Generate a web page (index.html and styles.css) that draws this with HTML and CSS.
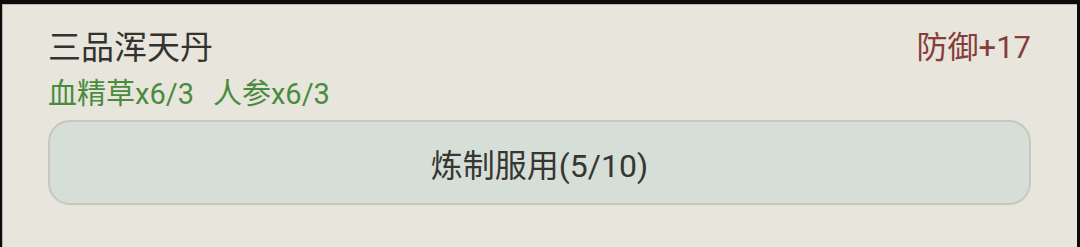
FILE: index.html
```html
<!DOCTYPE html>
<html lang="zh">
<head>
<meta charset="utf-8">
<link rel="stylesheet" href="styles.css">
</head>
<body>
<div class="frame">
  <div class="card">
    <div class="head">
      <div class="title">三品浑天丹</div>
      <div class="stat">防御+17</div>
    </div>
    <div class="mats"><span>血精草x6/3</span><span>人参x6/3</span></div>
    <div class="btn">炼制服用(5/10)</div>
  </div>
</div>
</body>
</html>
```
FILE: styles.css
```css
html, body {
  margin: 0;
  padding: 0;
  background: #0b0b0b;
  width: 1080px;
  height: 247px;
  overflow: hidden;
}
.frame {
  margin: 4px 3px 0 2px;
  height: 243px;
  background: #e8e5dc;
  border-top: 1px solid #b9b7b0;
  border-left: 1px solid #b9b7b0;
  box-sizing: border-box;
  font-family: Roboto, "Noto Sans CJK SC", sans-serif;
}
.card {
  padding: 23px 46px 0 45px;
}
.head {
  display: flex;
  justify-content: space-between;
  align-items: center;
  height: 40px;
}
.title {
  font-size: 33px;
  line-height: 40px;
  color: #333330;
}
.stat {
  font-size: 31px;
  line-height: 40px;
  color: #873d3b;
}
.mats {
  margin-top: 8px;
  display: flex;
  gap: 19px;
  font-size: 29px;
  line-height: 36px;
  color: #4a8c3e;
}
.btn {
  margin-top: 8px;
  height: 85px;
  box-sizing: border-box;
  border: 2px solid #c9c6bd;
  border-radius: 22px;
  background: #d5dfd8;
  display: flex;
  align-items: center;
  justify-content: center;
  font-size: 32px;
  color: #363633;
}
```
